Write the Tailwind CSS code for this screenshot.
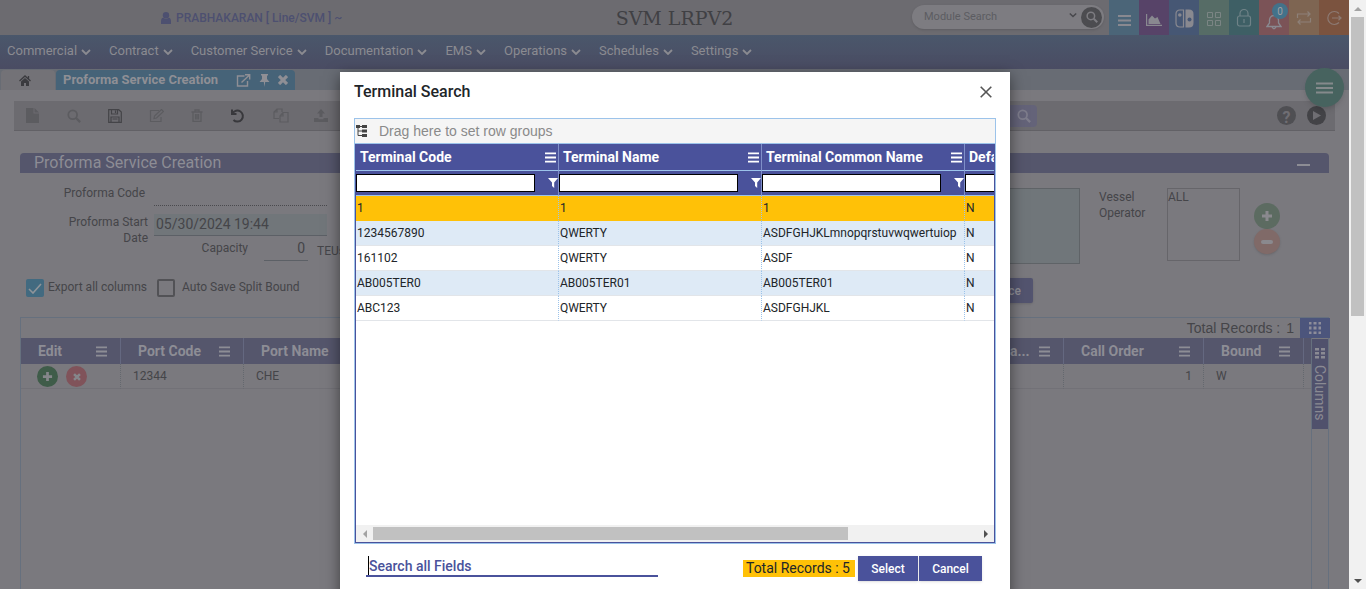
<!DOCTYPE html>
<html lang="en">
<head>
<meta charset="utf-8">
<title>SVM LRPV2</title>
<script src="https://cdn.jsdelivr.net/npm/@tailwindcss/browser@4"></script>
</head>
<body class="font-[Roboto,sans-serif] text-[#454549]">
<svg class="hidden">
  <symbol id="bars" viewBox="0 0 12 12"><path d="M0 1.500h12M0 6h12M0 10.500h12" stroke="currentColor" stroke-width="2"/></symbol>
  <symbol id="chev" viewBox="0 0 10 6"><path d="M1 1l4 4 4-4" fill="none" stroke="currentColor" stroke-width="1.800"/></symbol>
  <symbol id="lens" viewBox="0 0 16 16"><circle cx="6.500" cy="6.500" r="5" fill="none" stroke="currentColor" stroke-width="2"/><path d="M10.300 10.300l4.700 4.700" stroke="currentColor" stroke-width="2.600"/></symbol>
  <symbol id="funnel" viewBox="0 0 10 10"><path d="M0 0h10L6.200 4.600V10L4 8V4.600z" fill="currentColor"/></symbol>
  <symbol id="plus" viewBox="0 0 12 12"><path d="M6 1v10M1 6h10" stroke="currentColor" stroke-width="3"/></symbol>
</svg>
<div class="relative flex h-screen overflow-hidden bg-[#7a797e]">
  <div class="min-w-0 flex-1">
    <header class="flex h-[35px] bg-[#6c6b70]">
      <div class="flex-1">
        <div class="flex h-full items-center gap-1 pl-[160px] text-[12px] font-medium text-[#4d5070]">
        <svg class="h-3 w-3" viewBox="0 0 12 12" fill="currentColor"><circle cx="6" cy="3.200" r="3.200"/><path d="M1 12V9.500Q1 6 3.200 5.800q2.800 2.200 5.600 0Q11 6 11 9.500V12z"/></svg>
        <span>PRABHAKARAN [ Line/SVM ] ~</span>
        </div>
      </div>
      <h1 class="pt-1 font-['DejaVu_Serif',serif] text-[19px] leading-7 text-[#404044]">SVM LRPV2</h1>
      <div class="flex flex-1 justify-end">
        <div class="mt-[5px] mr-[5px] flex h-6 w-[192px] items-center rounded-full bg-[#7d7c81] pr-0.5 pl-3 shadow-sm">
          <input aria-label="Module Search" placeholder="Module Search" class="min-w-0 flex-1 text-[11px] placeholder-[#5c5c61] outline-none">
          <svg class="mr-1 mb-1 h-[6px] w-2 text-[#48484c]"><use href="#chev"/></svg>
          <button aria-label="Search" class="grid h-[21px] w-[21px] place-items-center rounded-full bg-[#4c4c50] text-[#7d7c81]"><svg class="h-3 w-3"><use href="#lens"/></svg></button>
        </div>
        <nav aria-label="Shortcuts" class="flex text-[#898990]">
          <button aria-label="List" class="grid w-[30px] place-items-center bg-[#4b6578] pt-1"><svg class="h-3 w-[13px]" viewBox="0 0 13 12"><path d="M0 2h13M0 6.500h13M0 11h13" stroke="currentColor" stroke-width="1.800"/></svg></button>
          <button aria-label="Chart" class="grid w-[30px] place-items-center bg-[#574368]"><svg class="mt-1 h-3 w-4" viewBox="0 0 16 12"><path d="M.6 0v11.300H16" fill="none" stroke="currentColor" stroke-width="1.200"/><path d="M2.500 10V5.500L6 1.500l3 3L11.500 3 14.500 10z" fill="currentColor"/></svg></button>
          <button aria-label="Switch" class="grid w-[30px] place-items-center bg-[#465774]"><svg class="mt-0.5 h-[19px] w-[19px]" viewBox="0 0 19 19"><path d="M8.500 1H5Q1 1 1 5v9q0 4 4 4h3.500z" fill="none" stroke="currentColor" stroke-width="1.200"/><circle cx="4.800" cy="6" r="1.800" fill="currentColor"/><path d="M10.500.5H14q4.500 0 4.500 4.500v9q0 4.500-4.500 4.500h-3.500z" fill="currentColor"/><circle cx="14.500" cy="10.500" r="2" fill="#465774"/></svg></button>
          <button aria-label="Apps" class="grid w-[30px] place-items-center bg-[#566c66] text-[#7b8584]"><svg class="mt-0.5 h-4 w-4" viewBox="0 0 16 16" fill="none" stroke="currentColor"><path d="M1.500 1.500h5v5h-5zM9.500 1.500h5v5h-5zM1.500 9.500h5v5h-5zM9.500 9.500h5v5h-5z"/></svg></button>
          <button aria-label="Lock" class="grid w-[30px] place-items-center bg-[#3e5f65] text-[#6f8287]"><svg class="h-[18px] w-4" viewBox="0 0 16 18" fill="none" stroke="currentColor" stroke-width="1.200"><rect x="1.500" y="7" width="13" height="10" rx="2"/><path d="M4 7V4.500a4 4 0 018 0V7M8 10v4"/></svg></button>
          <button aria-label="Notifications" class="relative grid w-[30px] place-items-center bg-[#7b5357]"><svg class="mt-2 h-[17px] w-4" viewBox="0 0 16 17" fill="none" stroke="currentColor" stroke-width="1.300"><path d="M1 13.500l2.500-3.500V7Q4 2.500 8 2.500T12.500 7v3l2.500 3.500zM6 14q2 3.500 4 0"/></svg><span class="absolute top-[3px] right-[1px] grid h-4 w-4 place-items-center rounded-full bg-[#43728a] text-[10px] text-[#a0a0a5]">0</span></button>
          <button aria-label="Swap" class="grid w-[30px] place-items-center bg-[#7e6552] text-[#8d8078]"><svg class="h-[14px] w-4" viewBox="0 0 16 14" fill="none" stroke="currentColor" stroke-width="1.200"><path d="M1.500 7V3H14M11.500.5L14 3l-2.500 2.500M14.500 7v4H2M4.500 8.500L2 11l2.500 2.500"/></svg></button>
          <button aria-label="Log out" class="grid w-[30px] place-items-center bg-[#7b533f] text-[#8d7a73]"><svg class="h-4 w-4" viewBox="0 0 16 16" fill="none" stroke="currentColor" stroke-width="1.200"><path d="M13 3.500a6.500 6.500 0 100 9M6 8h9M12.500 5.800L15 8l-2.500 2.200"/></svg></button>
        </nav>
      </div>
    </header>
    <nav aria-label="Main" class="flex h-[34px] items-center gap-[18px] bg-gradient-to-b from-[#4a576b] to-[#4a4c63] pb-0.5 pl-[7px] text-[13px] text-[#8b8b91]">
      <button class="flex items-center gap-1">Commercial<svg class="mt-0.5 h-[6px] w-[10px]"><use href="#chev"/></svg></button>
      <button class="flex items-center gap-1">Contract<svg class="mt-0.5 h-[6px] w-[10px]"><use href="#chev"/></svg></button>
      <button class="flex items-center gap-1">Customer Service<svg class="mt-0.5 h-[6px] w-[10px]"><use href="#chev"/></svg></button>
      <button class="flex items-center gap-1">Documentation<svg class="mt-0.5 h-[6px] w-[10px]"><use href="#chev"/></svg></button>
      <button class="flex items-center gap-1">EMS<svg class="mt-0.5 h-[6px] w-[10px]"><use href="#chev"/></svg></button>
      <button class="flex items-center gap-1">Operations<svg class="mt-0.5 h-[6px] w-[10px]"><use href="#chev"/></svg></button>
      <button class="flex items-center gap-1">Schedules<svg class="mt-0.5 h-[6px] w-[10px]"><use href="#chev"/></svg></button>
      <button class="flex items-center gap-1">Settings<svg class="mt-0.5 h-[6px] w-[10px]"><use href="#chev"/></svg></button>
    </nav>
    <div class="flex h-[21px] gap-px bg-[#686c74] pt-px pl-px">
      <button aria-label="Home" class="grid w-[54px] place-items-center rounded-t-sm bg-[#737277] pr-[6px] text-[#3b3b3f]"><svg class="h-[11px] w-3" viewBox="0 0 12 11"><path d="M.5 6L6 1l5.500 5M9.500 1v3" fill="none" stroke="currentColor" stroke-width="1.300"/><path d="M2 6.500l4-3.600 4 3.600V11H7V8H5v3H2z" fill="currentColor"/></svg></button>
      <div class="flex w-[239px] items-center rounded-t-sm bg-[#466378] px-[7px] text-[#8f8f95]">
        <span class="flex-1 text-[13px] font-bold">Proforma Service Creation</span>
        <div class="flex items-center gap-2">
        <button aria-label="Open in window"><svg class="h-[13px] w-[15px]" viewBox="0 0 14 13" fill="none" stroke="currentColor" stroke-width="1.400"><path d="M8 2H1v10h10V7M5 8.500L13 1M8.500.8H13.200V5.500"/></svg></button>
        <button aria-label="Pin"><svg class="h-[13px] w-[11px]" viewBox="0 0 11 13" fill="currentColor"><path d="M2 0h7v1.500H8V5l2.500 3H6.200l-.7 5-.7-5H.5L3 5V1.500H2z"/></svg></button>
        <button aria-label="Close tab"><svg class="h-[10px] w-[10px]" viewBox="0 0 10 10" stroke="currentColor" stroke-width="3.200"><path d="M1 1l8 8M9 1L1 9"/></svg></button>
        </div>
      </div>
    </div>
    <main class="px-[14px] pt-[11px]">
      <div class="flex h-[30px] items-center border-b border-[#626166] bg-[#6c6b70] text-[#5c5c60]">
        <div class="flex">
          <button aria-label="New" class="grid w-[37px] place-items-center"><svg class="h-[15px] w-[13px]" viewBox="0 0 13 15" fill="currentColor"><path d="M0 0h7.500v5.500H13V15H0zM8.500 0L13 4.500H8.500z"/></svg></button>
          <button aria-label="Find" class="grid w-[45px] place-items-center"><svg class="h-[14px] w-[14px]"><use href="#lens"/></svg></button>
          <button aria-label="Save" class="grid w-[37px] place-items-center text-[#444448]"><svg class="h-[14px] w-[14px]" viewBox="0 0 14 14" fill="none" stroke="currentColor" stroke-width="1.200"><path d="M.7.700h10L13.300 3v10.300H.7zM3.500 1v4h6V1M3 13V8h8v5M7.500 1.500v2.500M4.500 10h5"/></svg></button>
          <button aria-label="Edit" class="grid w-[46px] place-items-center"><svg class="h-[14px] w-[15px]" viewBox="0 0 15 14" fill="none" stroke="currentColor" stroke-width="1.200"><path d="M10 1.500H1.500v11H12V8M5 9.500l.5-2.500 7-6.500L14.500 2.500 7.500 9z"/></svg></button>
          <button aria-label="Delete" class="grid w-[36px] place-items-center"><svg class="h-[13px] w-[12px]" viewBox="0 0 12 13" fill="none" stroke="currentColor" stroke-width="1.300"><path d="M.5 3h11M4 3V1h4v2M2 3v9.300h8V3M4.500 5v5.500M6 5v5.500M7.500 5v5.500"/></svg></button>
          <button aria-label="Undo" class="grid w-[46px] place-items-center text-[#38383c]"><svg class="h-[14px] w-[14px]" viewBox="0 0 14 14" fill="none" stroke="currentColor" stroke-width="2"><path d="M1 .5V5h4.500M1.500 4.500A5.500 5.500 0 112.500 11"/></svg></button>
          <button aria-label="Copy" class="grid w-[40px] place-items-center"><svg class="h-[15px] w-[16px]" viewBox="0 0 16 15" fill="none" stroke="currentColor" stroke-width="1.200"><path d="M6 10.500H1V4l3-3h5v3M4 1v3H1M7 8l3-3.500h5V14H7zM10 4.500V8H7"/></svg></button>
          <button aria-label="Upload" class="grid w-[40px] place-items-center"><svg class="h-[13px] w-[14px]" viewBox="0 0 14 13" fill="currentColor"><path d="M7 0l4 4.500H8.500V8h-3V4.500H3zM0 9h4.500v1.200h5V9H14v4H0z"/></svg></button>
        </div>
        <div class="ml-auto flex items-center">
          <button aria-label="Search records" class="mr-[240px] grid h-[22px] w-[36px] place-items-center rounded-sm bg-[#646379] pl-[10px] text-[#7e7d8c]"><svg class="h-[14px] w-[14px]"><use href="#lens"/></svg></button>
          <button aria-label="Help" class="mr-[11px] grid h-[19px] w-[19px] place-items-center rounded-full bg-[#4f4f53] text-[16px] font-bold text-[#6f6e73]">?</button>
          <button aria-label="Play" class="mr-[9px] grid h-[19px] w-[19px] place-items-center rounded-full bg-[#434347] text-[#6f6e73]"><svg class="h-[9px] w-2" viewBox="0 0 8 9"><path d="M0 0l8 4.500L0 9z" fill="currentColor"/></svg></button>
        </div>
      </div>
      <div class="px-[6px] pt-[22px]">
        <div class="flex h-5 items-center justify-between rounded-t-sm bg-[#55566c] pr-[19px] pl-[14px]">
          <h2 class="text-[16px] text-[#8d8d95]">Proforma Service Creation</h2>
          <button aria-label="Collapse" class="mt-1 h-[2px] w-[13px] bg-[#8d8d95]"></button>
        </div>
        <form class="flex h-[144px] justify-between text-[12px]">
          <div class="w-[330px] pt-3">
            <div class="flex h-[21px] gap-[9px]">
              <label for="code" class="w-[125px] text-right leading-4">Proforma Code</label>
              <input id="code" class="w-[173px] border-b border-dotted border-[#4a4a4e]">
            </div>
            <div class="mt-2 flex h-[22px] gap-[6px]">
              <label for="start" class="w-[128px] text-right leading-4">Proforma Start<br>Date</label>
              <input id="start" value="05/30/2024 19:44" class="w-[173px] border-b border-[#5c6066] bg-[#71767a] px-0.5 text-[14px]">
            </div>
            <div class="flex h-[25px] items-center">
              <label for="cap" class="w-[228px] pb-0.5 text-right">Capacity</label>
              <input id="cap" value="0" class="ml-4 h-[25px] w-11 border-b border-[#5c6066] pr-[3px] text-right text-[14px]"><span class="ml-[9px] pt-1">TEUs</span>
            </div>
            <div class="mt-[17px] flex items-center pl-[6px]">
              <span class="relative h-[18px] w-[18px]"><input id="exp" type="checkbox" checked class="block h-[18px] w-[18px] appearance-none rounded-xs bg-[#426a80]"><svg class="pointer-events-none absolute top-1 left-0.5 h-[11px] w-[14px]" viewBox="0 0 14 11"><path d="M1 6l4 4 8-9" fill="none" stroke="#8f9499" stroke-width="1.600"/></svg></span>
              <label for="exp" class="w-[113px] pb-0.5 pl-1">Export all columns</label>
              <input id="auto" type="checkbox" class="h-[18px] w-[18px] appearance-none rounded-xs border-2 border-[#525256]">
              <label for="auto" class="pb-0.5 pl-[7px]">Auto Save Split Bound</label>
            </div>
          </div>
          <div class="flex w-[409px] pt-[15px]">
            <div class="w-[160px]">
              <textarea aria-label="Remarks" class="block h-[76px] w-[160px] resize-none border border-[#5f6367] bg-[#70767a]"></textarea>
              <button type="button" class="mt-[14px] h-[25px] w-[113px] rounded-xs bg-[#53546f] pr-3 text-right font-medium text-[#8d8d95] shadow">Service</button>
            </div>
            <label for="oper" class="w-[87px] pt-px pl-[19px] leading-4">Vessel<br>Operator</label>
            <select id="oper" multiple class="h-[73px] w-[73px] appearance-none overflow-hidden border border-[#66656a] pt-px text-[12px] text-[#454549]"><option>ALL</option></select>
            <div class="flex flex-col pt-[15px] pl-[14px] text-[#8a898e]">
              <button type="button" aria-label="Add operator" class="grid h-[26px] w-[26px] place-items-center rounded-full bg-[#5c6b61]"><svg class="h-3 w-3"><use href="#plus"/></svg></button>
              <button type="button" aria-label="Remove operator" class="grid h-[25px] w-[26px] place-items-center rounded-full bg-[#806a68] shadow-sm"><span class="h-1 w-3 rounded-xs bg-[#8a898e]"></span></button>
            </div>
          </div>
        </form>
        <section class="flex h-[290px] border border-[#66707e]">
          <div class="min-w-0 flex-1">
            <div class="flex h-5 items-center justify-end gap-[6px] pr-[17px] font-['Liberation_Sans',sans-serif] text-[14px] whitespace-nowrap"><span>Total Records :</span><span>1</span></div>
            <table class="w-full table-fixed border-separate border-spacing-0 text-left text-[12px]">
              <colgroup><col class="w-[100px]"><col class="w-[123px]"><col><col class="w-[120px]"><col class="w-[140px]"><col class="w-[100px]"><col class="w-[7px]"></colgroup>
              <thead><tr class="h-[26px] bg-[#55566c] text-[14px] text-[#8d8d95] [&>th]:border-r [&>th]:border-[#646880] [&>th]:p-0 [&_div]:flex [&_div]:items-center [&_div]:justify-between [&_div]:pl-[17px] [&_svg]:mr-[13px] [&_svg]:h-[11px] [&_svg]:w-[11px]">
                <th><div>Edit<svg><use href="#bars"/></svg></div></th>
                <th><div>Port Code<svg><use href="#bars"/></svg></div></th>
                <th><div>Port Name</div></th>
                <th><div><span class="pl-[49px]">a...</span><svg><use href="#bars"/></svg></div></th>
                <th><div>Call Order<svg><use href="#bars"/></svg></div></th>
                <th><div>Bound<svg><use href="#bars"/></svg></div></th>
                <th class="border-r-0!"></th>
              </tr></thead>
              <tbody><tr class="h-[25px] [&>td]:border-r [&>td]:border-b [&>td]:border-r-[#64686e] [&>td]:border-b-[#727177] [&>td]:[border-right-style:dotted] [&>td]:p-0 [&>td]:pl-3">
                <td><div class="flex gap-2 pt-px pl-1 text-[#85868a]"><button aria-label="Add row" class="grid h-[21px] w-[21px] place-items-center rounded-full bg-[#3f5c49]"><svg class="h-[11px] w-[11px]"><use href="#plus"/></svg></button><button aria-label="Delete row" class="grid h-[21px] w-[21px] place-items-center rounded-full bg-[#80535a]"><svg class="h-[10px] w-[10px] rotate-45"><use href="#plus"/></svg></button></div></td>
                <td>12344</td><td>CHE</td><td></td><td class="text-right"><span class="pr-[11px]">1</span></td><td>W</td><td class="border-r-0! pl-0!"></td>
              </tr></tbody>
            </table>
          </div>
          <div class="w-[17px] border-l border-[#66707e]">
            <button aria-label="Grid options" class="-ml-3 grid h-5 w-[30px] place-items-center bg-[#4c557c] text-[#8d8d9a]"><svg class="h-3 w-3" viewBox="0 0 12 12" fill="currentColor"><path d="M0 0h2.500v2.500H0zM4.500 0h3v2.500h-3zM9.500 0H12v2.500H9.500zM0 4.500h2.500v3H0zM4.500 4.500h3v3h-3zM9.500 4.500H12v3H9.500zM0 9.500h2.500V12H0zM4.500 9.500h3V12h-3zM9.500 9.500H12V12H9.500z"/></svg></button>
            <button class="mt-px flex h-[90px] w-4 flex-col items-center gap-[6px] bg-[#50516c] pt-[9px] text-[14px] text-[#8a8a93]"><svg class="h-[11px] w-[10px] shrink-0" viewBox="0 0 10 11" fill="currentColor"><path d="M0 0h4v2.500H0zM6 0h4v2.500H6zM0 4h4v2.500H0zM6 4h4v2.500H6zM0 8h4v2.500H0zM6 8h4v2.500H6z"/></svg><span class="leading-4 [writing-mode:vertical-rl]">Columns</span></button>
          </div>
        </section>
      </div>
    </main>
  </div>
  <!-- Window scrollbar -->
  <div class="flex w-[17px] flex-col items-center bg-[#f1f1f1]">
    <div class="grid h-[17px] place-items-center"><div class="border-x-4 border-b-4 border-x-transparent border-b-[#a3a3a3]"></div></div>
    <div class="h-[299px] w-[13px] bg-[#c1c1c1]"></div>
    <div class="mt-auto grid h-[17px] place-items-center"><div class="border-x-4 border-t-4 border-x-transparent border-t-[#505050]"></div></div>
  </div>
  <button aria-label="Quick menu" class="absolute top-[68px] right-[22px] grid h-[39px] w-[39px] place-items-center rounded-full bg-[#47635f] text-[#858a8c] shadow-md"><svg class="h-3 w-[17px]" viewBox="0 0 17 12"><path d="M0 1.500h17M0 6h17M0 10.500h17" stroke="currentColor" stroke-width="2"/></svg></button>

  <div role="dialog" aria-labelledby="dlg" class="absolute top-[72px] left-[340px] flex h-[540px] w-[670px] flex-col bg-white px-[14px] text-[#212529] shadow-[0_4px_14px_rgba(0,0,0,0.5)]">
    <div class="flex h-[46px] items-center justify-between pr-[4px] pb-[6px]">
      <h2 id="dlg" class="text-[16px] font-medium">Terminal Search</h2>
      <button aria-label="Close" class="text-[#555]"><svg class="h-3 w-3" viewBox="0 0 12 12" stroke="currentColor" stroke-width="1.600"><path d="M.7.700l10.600 10.600M11.300.7L.7 11.300"/></svg></button>
    </div>
    <div class="flex h-[426px] w-full flex-col border border-[#9cc3ea]">
      <div class="flex h-[25px] items-center gap-3 border-b border-[#9cc3ea] bg-[#f5f5f5] pl-px font-['Liberation_Sans',sans-serif] text-[14px] text-[#8a8a8a]">
        <svg class="h-3 w-[11px] text-[#444]" viewBox="0 0 11 12" fill="currentColor"><path d="M0 0h4v3H0zM6 0h5v3H6zM6 4.500h5v3H6zM6 9h5v3H6z"/><path d="M2 2v8.500h4M2 6h4M3 1.500h3" fill="none" stroke="currentColor"/></svg>Drag here to set row groups
      </div>
      <div class="flex min-h-0 flex-1 flex-col border-x border-b border-[#4a529b]">
        <div class="min-h-0 flex-1 overflow-hidden">
          <table class="w-[812px] table-fixed border-separate border-spacing-0 text-left text-[12px]">
            <thead class="bg-[#4a529b] text-white">
              <tr class="h-[27px] [&>th]:border-r [&>th]:border-b [&>th]:border-r-[#7f8fc8] [&>th]:border-b-[#9cc3ea] [&>th]:p-0 [&_div]:flex [&_div]:items-center [&_div]:justify-between [&_div]:pr-0.5 [&_div]:pl-1 [&_div]:text-[14px] [&_svg]:h-[11px] [&_svg]:w-[11px]">
                <th><div>Terminal Code<svg><use href="#bars"/></svg></div></th>
                <th><div>Terminal Name<svg><use href="#bars"/></svg></div></th>
                <th><div>Terminal Common Name<svg><use href="#bars"/></svg></div></th>
                <th><div>Default<svg><use href="#bars"/></svg></div></th>
              </tr>
              <tr class="h-[25px] [&>td]:border-r [&>td]:border-b [&>td]:border-r-[#7f8fc8] [&>td]:border-b-[#9cc3ea] [&>td]:p-0 [&_div]:flex [&_div]:items-center [&_div]:justify-between [&_input]:h-[18px] [&_input]:w-[179px] [&_input]:border [&_input]:border-black [&_input]:bg-white [&_input]:px-1 [&_input]:text-black [&_svg]:h-[10px] [&_svg]:w-[10px]">
                <td><div><input aria-label="Filter Terminal Code"><svg><use href="#funnel"/></svg></div></td>
                <td><div><input aria-label="Filter Terminal Name"><svg><use href="#funnel"/></svg></div></td>
                <td><div><input aria-label="Filter Terminal Common Name"><svg><use href="#funnel"/></svg></div></td>
                <td><div><input aria-label="Filter Default"><svg><use href="#funnel"/></svg></div></td>
              </tr>
            </thead>
            <tbody class="[&_td]:h-[25px] [&_td]:border-r [&_td]:border-b [&_td]:border-r-[#9cc3ea] [&_td]:border-b-[#e2e5e9] [&_td]:[border-right-style:dotted] [&_td]:p-0 [&_td]:pl-px">
              <tr class="bg-[#ffc107]"><td class="border-b-[#ffc107]!">1</td><td class="border-b-[#ffc107]!">1</td><td class="border-b-[#ffc107]!">1</td><td class="border-b-[#ffc107]!">N</td></tr>
              <tr class="bg-[#deeaf6]"><td>1234567890</td><td>QWERTY</td><td>ASDFGHJKLmnopqrstuvwqwertuiop</td><td>N</td></tr>
              <tr><td>161102</td><td>QWERTY</td><td>ASDF</td><td>N</td></tr>
              <tr class="bg-[#deeaf6]"><td>AB005TER0</td><td>AB005TER01</td><td>AB005TER01</td><td>N</td></tr>
              <tr><td>ABC123</td><td>QWERTY</td><td>ASDFGHJKL</td><td>N</td></tr>
            </tbody>
          </table>
        </div>
        <div class="flex h-[17px] items-center bg-[#f1f1f1]">
          <div class="grid w-[17px] place-items-center"><div class="border-y-4 border-r-4 border-y-transparent border-r-[#a3a3a3]"></div></div>
          <div class="h-[13px] w-[475px] bg-[#c1c1c1]"></div>
          <div class="ml-auto grid w-[17px] place-items-center"><div class="border-y-4 border-l-4 border-y-transparent border-l-[#505050]"></div></div>
        </div>
      </div>
    </div>
    <div class="flex items-start pt-3 pr-[14px] pl-3">
      <div class="flex h-[21px] w-[292px] items-center border-b-2 border-[#4a529b] pl-0.5">
        <input autofocus aria-label="Search all Fields" placeholder="Search all Fields" class="h-[19px] w-full border-l border-black pt-0.5 text-[14px] font-medium caret-transparent placeholder-[#4a529b] outline-none">
      </div>
      <span class="mt-[4px] ml-auto h-[17px] bg-[#ffc107] pr-[5px] pl-[3px] text-[14px] leading-[17px]">Total Records : 5</span>
      <div class="ml-[3px] flex gap-px text-[12px] font-medium text-white">
        <button class="h-[25px] w-[60px] bg-[#4a529b] shadow">Select</button>
        <button class="h-[25px] w-[63px] bg-[#4a529b] shadow">Cancel</button>
      </div>
    </div>
  </div>
</div>
</body>
</html>
